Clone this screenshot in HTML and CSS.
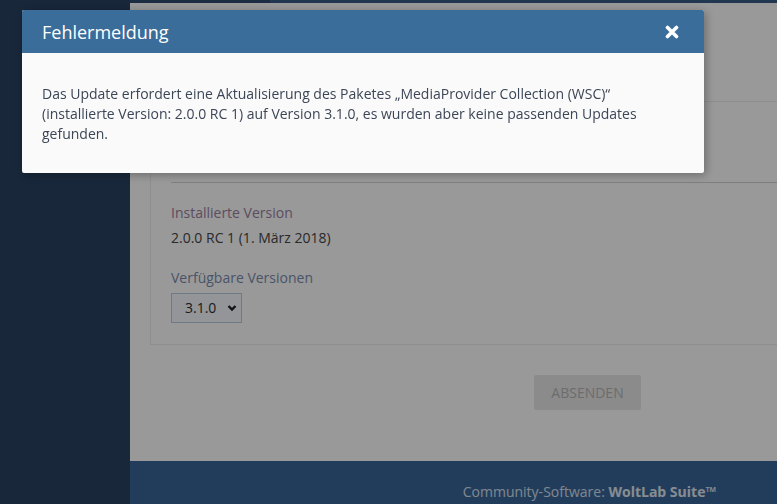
FILE: index.html
```html
<!DOCTYPE html>
<html lang="de">
<head>
    <meta charset="UTF-8">
    <meta name="viewport" content="width=device-width, initial-scale=1.0">
    <title>Paket aktualisieren - WoltLab Suite</title>
    <link rel="stylesheet" href="styles.css">
</head>
<body>
    <div class="page">
        <aside class="sidebar"></aside>

        <div class="main">
            <div class="main-inner">
                <div class="topbar">
                    <span class="topbar-tab"></span>
                </div>

                <div class="content">
                    <section class="section">
                        <div class="section-head"></div>
                        <hr class="section-rule">

                        <dl class="field">
                            <dt class="field-label">Installierte Version</dt>
                            <dd class="field-value">2.0.0 RC 1 (1. März 2018)</dd>
                        </dl>

                        <dl class="field">
                            <dt class="field-label field-label-blue">Verfügbare Versionen</dt>
                            <dd>
                                <div class="select">
                                    <span>3.1.0</span>
                                    <svg class="select-arrow" width="10" height="8" viewBox="0 0 10 8">
                                        <path d="M1.5 2 L5 5.5 L8.5 2" fill="none" stroke="#1f1f1f" stroke-width="2.4"/>
                                    </svg>
                                </div>
                            </dd>
                        </dl>
                    </section>

                    <div class="form-submit">
                        <button class="button" disabled>Absenden</button>
                    </div>
                </div>

                <footer class="footer">
                    Community-Software: <strong>WoltLab Suite™</strong>
                </footer>
            </div>
        </div>
    </div>

    <div class="overlay"></div>

    <div class="dialog">
        <div class="dialog-header">
            <span class="dialog-title">Fehlermeldung</span>
            <svg class="dialog-close" width="14" height="14" viewBox="0 0 14 14">
                <path d="M2.5 2.5 L11.5 11.5 M11.5 2.5 L2.5 11.5" stroke="#fff" stroke-width="3.6" stroke-linecap="round"/>
            </svg>
        </div>
        <div class="dialog-body">
            Das Update erfordert eine Aktualisierung des Paketes „MediaProvider Collection (WSC)“ (installierte Version: 2.0.0 RC 1) auf Version 3.1.0, es wurden aber keine passenden Updates gefunden.
        </div>
    </div>
</body>
</html>
```

FILE: styles.css
```css
html, body {
    margin: 0;
    height: 100%;
    overflow: hidden;
}
body {
    font-family: "Open Sans", "DejaVu Sans", sans-serif;
    font-size: 14px;
    line-height: 20px;
    color: #3a3a3d;
    background-color: #fff;
}
.page {
    display: flex;
    height: 100%;
}
.sidebar {
    width: 130px;
    flex-shrink: 0;
    background-color: #284161;
}
.main {
    flex: 1;
    min-width: 0;
    overflow: hidden;
}
/* the page is wider than the window: keep its own width and let .main clip it */
.main-inner {
    width: 915px;
    height: 100%;
    display: flex;
    flex-direction: column;
}
.topbar {
    height: 3px;
    flex-shrink: 0;
    background-color: #375c88;
    display: flex;
}
.topbar-tab {
    width: 140px;
    background-color: #2f4c71;
}
.content {
    flex: 1;
    padding: 0 20px;
}
.section {
    margin-top: 98px;
    border: 1px solid #ededed;
    padding: 20px 20px 21px;
}
.section-head {
    height: 60px;
}
.section-rule {
    border: none;
    border-top: 1px solid #d2d2d2;
    margin: 0 0 20px;
}
.field {
    margin: 0 0 20px;
}
.field:last-child {
    margin-bottom: 0;
}
.field-label {
    color: #99819f;
    margin-bottom: 5px;
}
.field-label-blue {
    color: #7b8db0;
}
.field dd {
    margin: 0;
}
.field-value {
    color: #464646;
}
.select {
    display: inline-flex;
    align-items: center;
    gap: 11px;
    height: 28px;
    padding: 0 4px 0 13px;
    background-color: #f5f9fd;
    border: 1px solid #b9cbe2;
    color: #2f2f2f;
}
.select-arrow {
    display: block;
}
.form-submit {
    display: flex;
    justify-content: center;
    margin-top: 30px;
}
.button {
    font-family: inherit;
    font-size: 14px;
    text-transform: uppercase;
    background-color: #e8e8e8;
    color: #b5b5b5;
    border: none;
    border-radius: 2px;
    width: 107px;
    height: 35px;
    padding: 0;
}
.footer {
    height: 43px;
    flex-shrink: 0;
    box-sizing: border-box;
    background-color: #3a6699;
    color: #d7e1ee;
    text-align: center;
    padding: 21px 16px 0 20px;
}
.footer strong {
    color: #e2eaf4;
}
.overlay {
    position: fixed;
    inset: 0;
    background-color: rgba(0, 0, 0, 0.4);
}
.dialog {
    position: fixed;
    top: 10px;
    left: 22px;
    width: 682px;
    background-color: #fafafa;
    border-radius: 2px;
    box-shadow: 2px 2px 10px rgba(0, 0, 0, 0.3);
}
.dialog-header {
    height: 43px;
    background-color: #3a6d9a;
    color: #fff;
    display: flex;
    align-items: center;
    justify-content: space-between;
    padding: 0 25px 0 20px;
    border-radius: 2px 2px 0 0;
}
.dialog-title {
    font-size: 18px;
}
.dialog-close {
    display: block;
}
.dialog-body {
    padding: 31px 20px 29px;
    color: #3b4656;
}
```
